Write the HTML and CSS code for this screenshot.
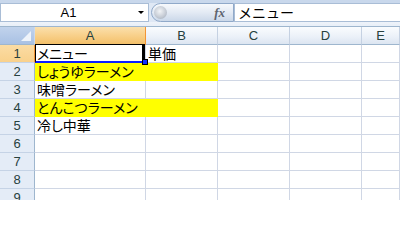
FILE: index.html
```html
<!DOCTYPE html>
<html lang="ja">
<head>
<meta charset="utf-8">
<link rel="stylesheet" href="styles.css">
</head>
<body>
<div class="toolbar">
  <div class="namebox">
    <span class="namebox-text">A1</span>
    <span class="namebox-arrow"></span>
  </div>
  <div class="fx-pill">
    <span class="fx-knob"></span>
    <span class="fx-label">fx</span>
  </div>
  <div class="formula">メニュー</div>
</div>
<div class="sheet">
  <div class="corner"><span class="corner-tri"></span></div>
  <div class="colhead sel">A</div>
  <div class="colhead">B</div>
  <div class="colhead">C</div>
  <div class="colhead">D</div>
  <div class="colhead">E</div>

  <div class="rowhead sel">1</div>
  <div class="cell active">メニュー<div class="selection"><span class="handle"></span></div></div>
  <div class="cell">単価</div>
  <div class="cell"></div><div class="cell"></div><div class="cell"></div>

  <div class="rowhead">2</div>
  <div class="cell fill">しょうゆラーメン</div>
  <div class="cell fill"></div>
  <div class="cell"></div><div class="cell"></div><div class="cell"></div>

  <div class="rowhead">3</div>
  <div class="cell">味噌ラーメン</div>
  <div class="cell"></div>
  <div class="cell"></div><div class="cell"></div><div class="cell"></div>

  <div class="rowhead">4</div>
  <div class="cell fill">とんこつラーメン</div>
  <div class="cell fill"></div>
  <div class="cell"></div><div class="cell"></div><div class="cell"></div>

  <div class="rowhead">5</div>
  <div class="cell">冷し中華</div>
  <div class="cell"></div>
  <div class="cell"></div><div class="cell"></div><div class="cell"></div>

  <div class="rowhead">6</div>
  <div class="cell"></div><div class="cell"></div><div class="cell"></div><div class="cell"></div><div class="cell"></div>
  <div class="rowhead">7</div>
  <div class="cell"></div><div class="cell"></div><div class="cell"></div><div class="cell"></div><div class="cell"></div>
  <div class="rowhead">8</div>
  <div class="cell"></div><div class="cell"></div><div class="cell"></div><div class="cell"></div><div class="cell"></div>
  <div class="rowhead">9</div>
  <div class="cell"></div><div class="cell"></div><div class="cell"></div><div class="cell"></div><div class="cell"></div>
</div>
</body>
</html>
```
FILE: styles.css
```css
html, body {
  margin: 0;
  padding: 0;
}
body {
  width: 400px;
  height: 200px;
  overflow: hidden;
  background: #ffffff;
  font-family: "Noto Sans CJK JP", "Liberation Sans", sans-serif;
}
.toolbar {
  box-sizing: border-box;
  height: 26px;
  border-top: 3px solid #c9d8ec;
  background: linear-gradient(#dfe8f5 0, #dfe8f5 19px, #eef3fa 19px, #e8eff8 23px);
  display: flex;
  align-items: flex-start;
}
.namebox {
  box-sizing: border-box;
  width: 149px;
  height: 19px;
  background: #ffffff;
  border: 1px solid #a9bdd6;
  display: flex;
  align-items: center;
  position: relative;
}
.namebox-text {
  flex: 1;
  text-align: center;
  font-family: "Liberation Sans", sans-serif;
  font-size: 13px;
  color: #000;
  padding-left: 4px;
}
.namebox-arrow {
  width: 0;
  height: 0;
  border-left: 3px solid transparent;
  border-right: 3px solid transparent;
  border-top: 3px solid #000;
  margin-right: 4px;
  margin-left: 6px;
}
.fx-pill {
  box-sizing: border-box;
  margin-left: 2px;
  width: 83px;
  height: 19px;
  border: 1px solid #90a9c9;
  border-radius: 10px 0 0 10px;
  background: linear-gradient(#f7f9fc, #e3eaf4 50%, #cbd8e9);
  display: flex;
  align-items: center;
}
.fx-knob {
  width: 13px;
  height: 13px;
  border-radius: 50%;
  margin-left: 2px;
  background: radial-gradient(circle at 45% 40%, #f2f4f7 0, #c6ccd5 55%, #9aa5b5 100%);
}
.fx-label {
  margin-left: auto;
  margin-right: 8px;
  font-family: "Liberation Serif", serif;
  font-style: italic;
  font-weight: bold;
  font-size: 13px;
  color: #5e6470;
}
.formula {
  box-sizing: border-box;
  flex: 1;
  height: 19px;
  background: #ffffff;
  border: 1px solid #a9bdd6;
  border-right: none;
  padding-left: 3px;
  font-size: 14px;
  line-height: 17px;
  color: #000;
  white-space: nowrap;
}
.sheet {
  display: grid;
  grid-template-columns: 35px 111px 72px 72px 72px 1fr;
  grid-auto-rows: 18px;
  border-top: 1px solid #9eb6ce;
}
.corner {
  box-sizing: border-box;
  background: linear-gradient(#c1d3ec, #a9c1e4);
  border-right: 1px solid #c9d8ec;
  border-bottom: 1px solid #9eb6ce;
  position: relative;
}
.corner-tri {
  position: absolute;
  right: 3px;
  bottom: 3px;
  width: 0;
  height: 0;
  border-left: 10px solid transparent;
  border-bottom: 10px solid #eef3fa;
}
.colhead {
  box-sizing: border-box;
  background: linear-gradient(#fafcfe, #eaf0f8 60%, #dce5f1);
  border-right: 1px solid #c5d1e2;
  border-bottom: 1px solid #9eb6ce;
  text-align: center;
  font-family: "Liberation Sans", sans-serif;
  font-size: 13px;
  line-height: 17px;
  color: #27413e;
}
.colhead.sel {
  background: linear-gradient(#fbe0ad, #f8d08a 50%, #f3c06a);
  border-right-color: #f29536;
  border-bottom-color: #f29536;
}
.rowhead {
  box-sizing: border-box;
  background: #e4ecf7;
  border-right: 1px solid #9eb6ce;
  border-bottom: 1px solid #c5d3e6;
  text-align: center;
  font-family: "Liberation Sans", sans-serif;
  font-size: 13px;
  line-height: 17px;
  color: #27413e;
}
.rowhead.sel {
  background: linear-gradient(#fbdca4, #f9d18c);
  border-right-color: #f29536;
}
.cell {
  box-sizing: border-box;
  border-right: 1px solid #d0d7e5;
  border-bottom: 1px solid #d0d7e5;
  padding-left: 2px;
  font-size: 14px;
  line-height: 17px;
  color: #000;
  white-space: nowrap;
  font-feature-settings: "palt";
}
.cell.fill {
  background: #ffff00;
  border-right-color: #ffff00;
  border-bottom-color: #ffff00;
}
.cell.active {
  position: relative;
}
.selection {
  position: absolute;
  left: 0;
  top: -1px;
  width: 110px;
  height: 19px;
  box-sizing: border-box;
  border-top: 1px solid #000;
  border-left: 1px solid #000;
  border-right: 3px solid #000;
  border-bottom: 2px solid #0a1eff;
}
.handle {
  position: absolute;
  left: 106px;
  top: 14px;
  width: 6px;
  height: 6px;
  box-sizing: border-box;
  background: #1030ff;
  border: 1px solid #000;
}
```
